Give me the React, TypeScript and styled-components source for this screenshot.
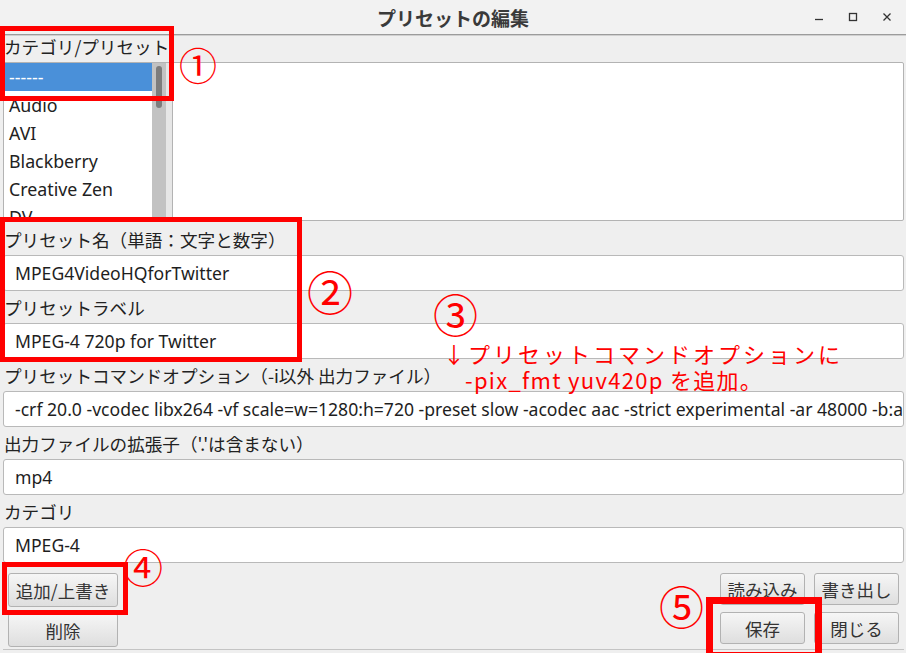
import React from 'react';
import styled, { createGlobalStyle } from 'styled-components';

const GlobalStyle = createGlobalStyle`
  html, body {
    margin: 0;
    padding: 0;
    background: #efefef;
  }
  body {
    font-family: "Noto Sans", "Noto Sans CJK JP", sans-serif;
    color: #222;
  }
`;

const Window = styled.div`
  position: relative;
  width: 906px;
  height: 653px;
  overflow: hidden;
  background: #efefef;
  display: flex;
  flex-direction: column;
`;

const TitleBar = styled.header`
  height: 34px;
  flex: none;
  display: grid;
  grid-template-columns: 1fr auto 1fr;
  align-items: center;
  background: #f2f2f2;
  border-bottom: 1px solid #9c9c9c;
  box-shadow: 0 1px 0 #d0d0d0;
`;

const Title = styled.h1`
  grid-column: 2;
  margin: 0;
  font-family: "Noto Sans CJK JP", sans-serif;
  font-size: 19px;
  font-weight: 700;
  color: #3a3a3a;
`;

const Controls = styled.div`
  justify-self: end;
  display: flex;
  padding-right: 2px;
`;

const ControlButton = styled.span`
  width: 34px;
  height: 34px;
  display: flex;
  align-items: center;
  justify-content: center;
  color: #333;
`;

const Content = styled.main`
  flex: 1;
  display: flex;
  flex-direction: column;
  padding: 0 2px 0 3px;
`;

const TopRow = styled.div`
  display: grid;
  grid-template-columns: 169px 1fr;
  align-items: end;
`;

const FieldLabel = styled.label<{ $height?: number }>`
  display: flex;
  align-items: flex-end;
  height: ${(p) => p.$height ?? 32}px;
  padding: 0 0 4px 1px;
  box-sizing: border-box;
  font-family: "Noto Sans CJK JP", sans-serif;
  font-size: 17.6px;
  line-height: 22px;
  color: #222;
  white-space: nowrap;
`;

const ListBox = styled.div`
  height: 159px;
  box-sizing: border-box;
  display: grid;
  grid-template-columns: 1fr 14px 6px;
  border: 1px solid #b3b3b3;
  border-right: none;
  background: #fff;
  overflow: hidden;
`;

const ListRows = styled.ul`
  margin: 0;
  padding: 0;
  list-style: none;
  overflow: hidden;
`;

const ListRow = styled.li<{ $selected?: boolean }>`
  height: 28px;
  padding-left: 5px;
  display: flex;
  align-items: center;
  font-size: 17.8px;
  white-space: nowrap;
  background: ${(p) => (p.$selected ? '#4a90d9' : 'transparent')};
  color: ${(p) => (p.$selected ? '#fff' : '#222')};
`;

const ScrollTrack = styled.div`
  background: #c2c2c2;
  padding: 3px 4px 0;
`;

const ScrollThumb = styled.div`
  height: 42px;
  border-radius: 3px;
  background: #7c7c7c;
`;

const ListGutter = styled.div`
  background: #e6e6e6;
`;

const DetailArea = styled.div`
  height: 159px;
  box-sizing: border-box;
  background: #fff;
  border: 1px solid #b3b3b3;
  border-radius: 0 2px 2px 0;
`;

const TextInput = styled.div`
  height: 36px;
  flex: none;
  box-sizing: border-box;
  display: flex;
  align-items: center;
  padding-left: 11px;
  background: #fff;
  border: 1px solid #b9b9b9;
  border-radius: 3px;
  font-size: 17.6px;
  color: #1e1e1e;
  white-space: nowrap;
  overflow: hidden;
`;

const ButtonArea = styled.div`
  margin-top: 10px;
  display: flex;
  justify-content: space-between;
`;

const LeftButtons = styled.div`
  display: flex;
  flex-direction: column;
  gap: 6px;
  padding-left: 5px;
`;

const RightButtons = styled.div`
  display: grid;
  grid-template-columns: 85px 85px;
  grid-auto-rows: 32px;
  column-gap: 9px;
  row-gap: 7px;
  padding-right: 5px;
`;

const Button = styled.button<{ $wide?: boolean }>`
  width: ${(p) => (p.$wide ? '110px' : '85px')};
  height: ${(p) => (p.$wide ? '34px' : '32px')};
  padding: 0;
  border: 1px solid #b2b2b2;
  border-radius: 3px;
  background: linear-gradient(#f6f6f6, #dedede);
  font-family: "Noto Sans CJK JP", sans-serif;
  font-size: 17.5px;
  color: #333;
`;

const BottomRule = styled.div`
  margin-top: auto;
  height: 3px;
  border-top: 1px solid #c4c4c4;
`;

/* red annotation overlays drawn on top of the screenshot */
const Highlight = styled.div<{ $x: number; $y: number; $w: number; $h: number; $t?: number }>`
  position: absolute;
  left: ${(p) => p.$x}px;
  top: ${(p) => p.$y}px;
  width: ${(p) => p.$w}px;
  height: ${(p) => p.$h}px;
  box-sizing: border-box;
  border: ${(p) => p.$t ?? 5}px solid #ff0000;
  pointer-events: none;
`;

const Marker = styled.span<{ $x: number; $y: number; $size: number }>`
  position: absolute;
  left: ${(p) => p.$x}px;
  top: ${(p) => p.$y}px;
  font-family: "Noto Sans CJK JP", sans-serif;
  font-size: ${(p) => p.$size}px;
  line-height: 1;
  color: #ff0000;
`;

const Note = styled.div`
  position: absolute;
  left: 443px;
  top: 340px;
  font-family: "Noto Sans CJK JP", sans-serif;
  font-size: 22px;
  line-height: 26px;
  color: #ff0000;
  white-space: nowrap;
`;

const NoteLine = styled.div<{ $indent?: number; $spacing?: number }>`
  padding-left: ${(p) => p.$indent ?? 0}px;
  letter-spacing: ${(p) => p.$spacing ?? 0}px;
`;

const presets = ['------', 'Audio', 'AVI', 'Blackberry', 'Creative Zen', 'DV'];

const fields = [
  { label: 'プリセット名（単語：文字と数字）', value: 'MPEG4VideoHQforTwitter', height: 34 },
  { label: 'プリセットラベル', value: 'MPEG-4 720p for Twitter' },
  {
    label: 'プリセットコマンドオプション（-i以外 出力ファイル）',
    value:
      '-crf 20.0 -vcodec libx264 -vf scale=w=1280:h=720 -preset slow -acodec aac -strict experimental -ar 48000 -b:a',
  },
  { label: "出力ファイルの拡張子（'.'は含まない）", value: 'mp4' },
  { label: 'カテゴリ', value: 'MPEG-4' },
];

const markers = [
  { n: '①', x: 179, y: 45, size: 38 },
  { n: '②', x: 307, y: 267, size: 46 },
  { n: '③', x: 433, y: 291, size: 45 },
  { n: '④', x: 123, y: 546, size: 40 },
  { n: '⑤', x: 659, y: 583, size: 45 },
];

const App: React.FC = () => {
  return (
    <>
      <GlobalStyle />
      <Window>
        <TitleBar>
          <Title>プリセットの編集</Title>
          <Controls>
            <ControlButton>
              <svg width="10" height="10" viewBox="0 0 10 10">
                <path d="M1 7.5h8" stroke="currentColor" strokeWidth="1.3" />
              </svg>
            </ControlButton>
            <ControlButton>
              <svg width="10" height="10" viewBox="0 0 10 10">
                <rect x="1.5" y="1.5" width="7" height="7" fill="none" stroke="currentColor" strokeWidth="1.3" />
              </svg>
            </ControlButton>
            <ControlButton>
              <svg width="10" height="10" viewBox="0 0 10 10">
                <path d="M1.5 1.5l7 7M8.5 1.5l-7 7" stroke="currentColor" strokeWidth="1.3" />
              </svg>
            </ControlButton>
          </Controls>
        </TitleBar>

        <Content>
          <TopRow>
            <div>
              <FieldLabel $height={27}>カテゴリ/プリセット</FieldLabel>
              <ListBox>
                <ListRows>
                  {presets.map((name, i) => (
                    <ListRow key={name} $selected={i === 0}>
                      {name}
                    </ListRow>
                  ))}
                </ListRows>
                <ScrollTrack>
                  <ScrollThumb />
                </ScrollTrack>
                <ListGutter />
              </ListBox>
            </div>
            <DetailArea />
          </TopRow>

          {fields.map((f) => (
            <React.Fragment key={f.label}>
              <FieldLabel $height={f.height}>{f.label}</FieldLabel>
              <TextInput>{f.value}</TextInput>
            </React.Fragment>
          ))}

          <ButtonArea>
            <LeftButtons>
              <Button $wide>追加/上書き</Button>
              <Button $wide>削除</Button>
            </LeftButtons>
            <RightButtons>
              <Button>読み込み</Button>
              <Button>書き出し</Button>
              <Button>保存</Button>
              <Button>閉じる</Button>
            </RightButtons>
          </ButtonArea>
          <BottomRule />
        </Content>

        <Highlight $x={0} $y={26} $w={174} $h={75} />
        <Highlight $x={0} $y={217} $w={302} $h={145} />
        <Highlight $x={2} $y={562} $w={126} $h={53} />
        <Highlight $x={706} $y={597} $w={116} $h={62} $t={7} />

        {markers.map((m) => (
          <Marker key={m.n} $x={m.x} $y={m.y} $size={m.size}>
            {m.n}
          </Marker>
        ))}

        <Note>
          <NoteLine $spacing={3}>↓プリセットコマンドオプションに</NoteLine>
          <NoteLine $indent={22} $spacing={1.3}>
            -pix_fmt yuv420p を追加。
          </NoteLine>
        </Note>
      </Window>
    </>
  );
};

export default App;
